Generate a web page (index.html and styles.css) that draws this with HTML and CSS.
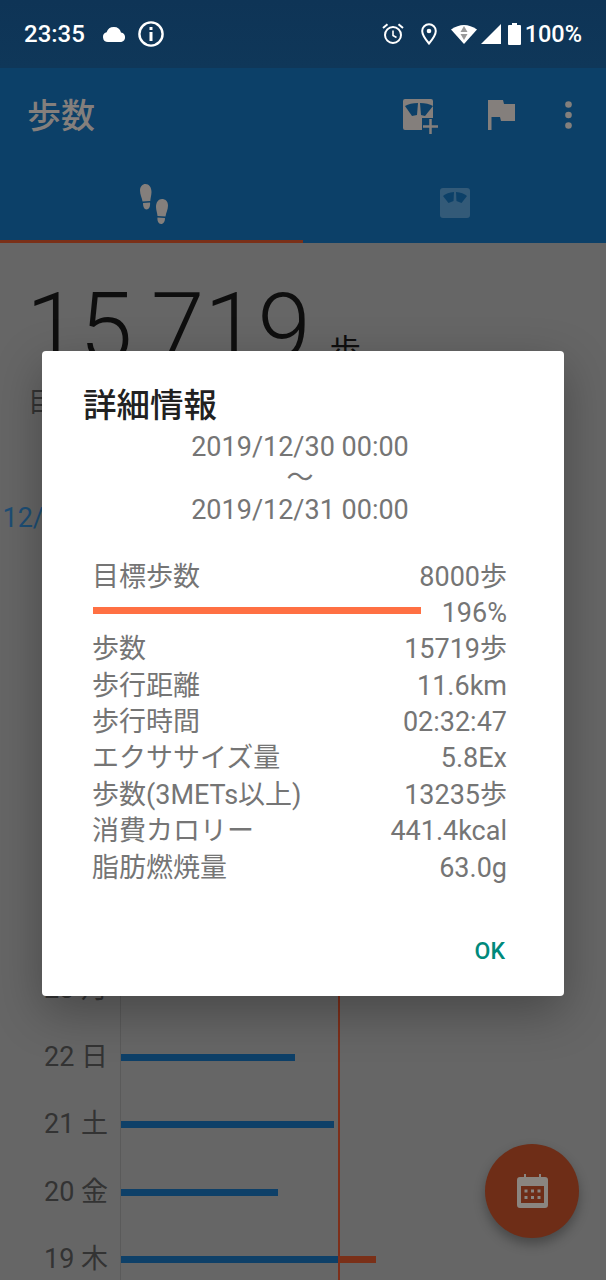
FILE: index.html
```html
<!DOCTYPE html>
<html lang="ja">
<head>
<meta charset="utf-8">
<title>歩数</title>
<link rel="stylesheet" href="styles.css">
</head>
<body>
<div class="screen">
  <header class="status">
    <span class="clock">23:35</span>
    <svg class="ic-cloud" viewBox="0 0 24 16"><path d="M6 16A5 5 0 0 1 4.600 6.200 7.600 7.600 0 0 1 12 1a7.400 7.400 0 0 1 7 5.400A4.900 4.900 0 0 1 19.300 16Z" fill="#fff"/></svg>
    <svg class="ic-info" viewBox="0 0 26 26"><circle cx="13" cy="13" r="11.600" fill="none" stroke="#fff" stroke-width="2.400"/><rect x="11.500" y="11" width="3" height="9" fill="#fff"/><rect x="11.500" y="6" width="3" height="3" fill="#fff"/></svg>
    <span class="spring"></span>
    <svg class="ic-alarm" viewBox="0 0 22 22"><circle cx="11" cy="12" r="8" fill="none" stroke="#fff" stroke-width="2"/><path d="M11 7.500V12.500L14.500 14.500" fill="none" stroke="#fff" stroke-width="1.600"/><path d="M1 5 5.500 1.200M21 5 16.500 1.200" stroke="#fff" stroke-width="2" fill="none"/></svg>
    <svg class="ic-pin" viewBox="0 0 16 22"><path d="M8 1.200A6.800 6.800 0 0 0 1.200 8C1.200 12.500 8 20.500 8 20.500S14.800 12.500 14.800 8A6.800 6.800 0 0 0 8 1.200Z" fill="none" stroke="#fff" stroke-width="2"/><circle cx="8" cy="8" r="2.300" fill="#fff"/></svg>
    <svg class="ic-wifi" viewBox="0 0 26 20"><path d="M0 5.500Q13-3.500 26 5.500L13 20Z" fill="#fff"/><path d="M13 2 16.500 8H9.500Z" fill="#999"/><path d="M13 16 9.500 10H16.500Z" fill="#999"/></svg>
    <svg class="ic-signal" viewBox="0 0 20 20"><path d="M20 0V20H0Z" fill="#fff"/></svg>
    <svg class="ic-batt" viewBox="0 0 13 22"><path d="M4 0H9V2H12A1 1 0 0 1 13 3V21A1 1 0 0 1 12 22H1A1 1 0 0 1 0 21V3A1 1 0 0 1 1 2H4Z" fill="#fff"/></svg>
    <span class="pct">100%</span>
  </header>

  <div class="appbar">
    <h1 class="title">歩数</h1>
    <svg class="ic-scale-add" viewBox="0 0 36 36">
      <path d="M2 0H28A2 2 0 0 1 30 2V19H19V31H2A2 2 0 0 1 0 29V2A2 2 0 0 1 2 0Z" fill="#847f7c"/>
      <path d="M2 7Q7 4 15 4L14 16 9 17Z" fill="#0c4068"/><path d="M17 4Q25 4 30 7L22 17 18 16Z" fill="#0c4068"/>
      <path d="M27.500 20V35M20 27.500H35" stroke="#847f7c" stroke-width="2.500" fill="none"/>
    </svg>
    <svg class="ic-flag" viewBox="0 0 27 30"><path d="M0 0H15L16 4H27V21H13L12 17H3.500V30H0Z" fill="#847f7c"/></svg>
    <svg class="ic-dots" viewBox="0 0 7 28"><circle cx="3.500" cy="3.500" r="3.300" fill="#847f7c"/><circle cx="3.500" cy="14" r="3.300" fill="#847f7c"/><circle cx="3.500" cy="24.500" r="3.300" fill="#847f7c"/></svg>
  </div>

  <nav class="tabs">
    <div class="tab tab-on">
      <svg class="ic-feet" viewBox="0 0 28 40">
        <path d="M5.500 0C9 0 11.500 3 11.500 8 11.500 11 10.500 14 10.300 17L2.500 17.500C2 14 0 10.500 0 6.500 0 2.500 2.500 0 5.500 0Z" fill="#847f7c"/>
        <path d="M3 19 10 18.500C10.500 22.500 9 25.500 6.500 25.500 4 25.500 3 22.500 3 19Z" fill="#847f7c"/>
        <path d="M22 15C25 15 28 17 28 21.500 28 25.500 26 29 25.500 32.500L17.500 32C17.300 29 16 26 16 23 16 18 18.500 15 22 15Z" fill="#847f7c"/>
        <path d="M17.500 33.500 25 34C25 37.500 23.500 40 21 40 18.500 40 17 37 17.500 33.500Z" fill="#847f7c"/>
      </svg>
    </div>
    <div class="tab">
      <svg class="ic-scale" viewBox="0 0 30 30">
        <rect width="30" height="30" rx="3" fill="#335a78"/>
        <path d="M3 8Q7 4.500 14 4L13.500 13 8.500 15Z" fill="#0c4068"/><path d="M16 4Q23 4.500 27 8L21.500 15 16.500 13Z" fill="#0c4068"/>
      </svg>
    </div>
  </nav>

  <main class="content">
    <section class="summary">
      <p class="total"><span class="total-num">15,719</span><span class="total-unit">歩</span></p>
      <p class="goal">目標歩数</p>
    </section>
    <section class="chart">
      <div class="goal-line"></div>
      <div class="row"><span class="day day-now">12/30 月</span><div class="track"><div class="bar" style="width:217px"></div><div class="bar-over" style="width:209px"></div></div></div>
      <div class="row"><span class="day">29 日</span><div class="track"><div class="bar" style="width:180px"></div></div></div>
      <div class="row"><span class="day">28 土</span><div class="track"><div class="bar" style="width:150px"></div></div></div>
      <div class="row"><span class="day">27 金</span><div class="track"><div class="bar" style="width:190px"></div></div></div>
      <div class="row"><span class="day">26 木</span><div class="track"><div class="bar" style="width:170px"></div></div></div>
      <div class="row"><span class="day">25 水</span><div class="track"><div class="bar" style="width:200px"></div></div></div>
      <div class="row"><span class="day">24 火</span><div class="track"><div class="bar" style="width:160px"></div></div></div>
      <div class="row"><span class="day">23 月</span><div class="track"><div class="bar" style="width:185px"></div></div></div>
      <div class="row"><span class="day">22 日</span><div class="track"><div class="bar" style="width:174px"></div></div></div>
      <div class="row"><span class="day">21 土</span><div class="track"><div class="bar" style="width:213px"></div></div></div>
      <div class="row"><span class="day">20 金</span><div class="track"><div class="bar" style="width:157px"></div></div></div>
      <div class="row"><span class="day">19 木</span><div class="track"><div class="bar" style="width:217px"></div><div class="bar-over" style="width:38px"></div></div></div>
    </section>
  </main>

  <button class="fab" type="button" aria-label="カレンダー">
    <svg viewBox="0 0 31 34"><path d="M7 0H9V3H22V0H24V3H28A3 3 0 0 1 31 6V31A3 3 0 0 1 28 34H3A3 3 0 0 1 0 31V6A3 3 0 0 1 3 3H7Z" fill="#8a8580"/><rect x="4" y="12" width="23" height="17" fill="#6e2d17"/><g fill="#8a8580"><rect x="7.500" y="15.500" width="3" height="3"/><rect x="14" y="15.500" width="3" height="3"/><rect x="20.500" y="15.500" width="3" height="3"/><rect x="7.500" y="22" width="3" height="3"/><rect x="14" y="22" width="3" height="3"/><rect x="20.500" y="22" width="3" height="3"/></g></svg>
  </button>

  <div class="dialog">
    <h2 class="d-title">詳細情報</h2>
    <div class="d-range">
      <div>2019/12/30 00:00</div>
      <div>〜</div>
      <div>2019/12/31 00:00</div>
    </div>
    <div class="d-table">
      <div class="d-row"><span>目標歩数</span><span>8000歩</span></div>
      <div class="d-progress"><div class="d-bar"></div><span>196%</span></div>
      <div class="d-row"><span>歩数</span><span>15719歩</span></div>
      <div class="d-row"><span>歩行距離</span><span>11.6km</span></div>
      <div class="d-row"><span>歩行時間</span><span>02:32:47</span></div>
      <div class="d-row"><span>エクササイズ量</span><span>5.8Ex</span></div>
      <div class="d-row"><span>歩数(3METs以上)</span><span>13235歩</span></div>
      <div class="d-row"><span>消費カロリー</span><span>441.4kcal</span></div>
      <div class="d-row"><span>脂肪燃焼量</span><span>63.0g</span></div>
    </div>
    <div class="d-actions"><span class="d-ok">OK</span></div>
  </div>
</div>
</body>
</html>
```

FILE: styles.css
```css
* { box-sizing: border-box; }
html, body { margin: 0; padding: 0; }
body { font-family: Roboto, "Noto Sans CJK JP", sans-serif; background: #666; }
svg { display: block; flex: none; }
p, h1, h2 { margin: 0; font-weight: 400; }

.screen { position: relative; width: 606px; height: 1280px; overflow: hidden; background: #666; }

.status { display: flex; align-items: center; height: 68px; padding: 0 24px; background: linear-gradient(#0e3456, #0f3759); color: #fff; }
.clock { font-size: 24px; font-weight: 500; width: 78px; }
.ic-cloud { width: 24px; height: 16px; }
.ic-info { width: 26px; height: 26px; margin-left: 12px; }
.spring { flex: 1; }
.ic-alarm { width: 22px; height: 22px; }
.ic-pin { width: 16px; height: 22px; margin-left: 17px; }
.ic-wifi { width: 26px; height: 20px; margin-left: 14px; }
.ic-signal { width: 20px; height: 20px; margin-left: 4px; }
.ic-batt { width: 13px; height: 22px; margin-left: 7px; }
.pct { font-size: 23.500px; font-weight: 500; margin-left: 4px; }

.appbar { display: flex; align-items: center; height: 94px; padding: 0 34px 0 27px; background: #0c4068; }
.title { flex: 1; font-size: 34px; font-weight: 500; color: #847f7c; margin-top: -4px; }
.ic-scale-add { width: 36px; height: 36px; margin-top: 3px; }
.ic-flag { width: 27px; height: 30px; margin-left: 49px; }
.ic-dots { width: 7px; height: 28px; margin-left: 50px; }

.tabs { display: flex; height: 81px; background: #0c4068; }
.tab { flex: 1; display: flex; align-items: center; justify-content: center; }
.tab-on { border-bottom: 3px solid #7a3018; padding-top: 5px; }
.ic-feet { width: 28px; height: 40px; margin-left: 5px; }
.ic-scale { width: 30px; height: 30px; margin-top: 1px; }

.content { position: relative; }
.summary { height: 241.500px; padding: 35px 0 0 26px; }
.total { display: flex; align-items: baseline; height: 100px; line-height: 100px; color: #0e0e0e; }
.total-num { font-size: 96px; font-weight: 300; }
.total-unit { font-size: 31px; margin-left: 19px; }
.goal { margin-top: 3px; padding-left: 2px; font-size: 27px; color: #333; }

.chart { position: relative; }
.goal-line { position: absolute; left: 338px; top: 0; bottom: 0; width: 1.500px; background: #7d2f1a; }
.row { display: grid; grid-template-columns: 108px 1fr; column-gap: 12px; height: 67.400px; align-items: stretch; }
.day { align-self: center; text-align: right; font-size: 27px; color: #333; white-space: nowrap; margin-top: -6px; }
.day-now { color: #1d4e75; }
.track { display: flex; align-items: center; border-left: 1.500px solid #5a5a5a; }
.bar { height: 7px; background: #0e4068; }
.bar-over { height: 7px; background: #7a3018; }

.fab { position: absolute; left: 485px; top: 1144px; width: 94px; height: 94px; border: 0; padding: 0; border-radius: 50%; background: #6e2d17; display: flex; align-items: center; justify-content: center; box-shadow: 0 6px 12px rgba(0,0,0,.3); }
.fab svg { width: 31px; height: 34px; }

.dialog { position: absolute; left: 42px; top: 351px; width: 522px; height: 645px; display: flex; flex-direction: column; padding: 0 48px 0 41px; background: #fff; border-radius: 4px; box-shadow: 0 16px 48px rgba(0,0,0,.3); }
.d-title { margin-top: 33px; font-size: 33.500px; line-height: 44px; font-weight: 500; color: #212121; }
.d-range { margin-top: 3.500px; padding-left: 1px; font-size: 27px; line-height: 31.500px; text-align: center; color: #757575; }
.d-table { margin-top: 32.500px; padding-left: 9px; padding-right: 9px; font-size: 27px; color: #757575; }
.d-row { display: flex; justify-content: space-between; height: 36.400px; line-height: 36.400px; white-space: nowrap; }
.d-progress { display: flex; align-items: center; justify-content: space-between; height: 36.400px; line-height: 36.400px; }
.d-bar { width: 328px; height: 7px; margin-left: 1px; margin-top: -5px; background: #ff7043; }
.d-actions { margin-top: auto; padding: 0 11px 31px 0; display: flex; justify-content: flex-end; }
.d-ok { font-size: 23px; font-weight: 500; color: #00897b; }
```
